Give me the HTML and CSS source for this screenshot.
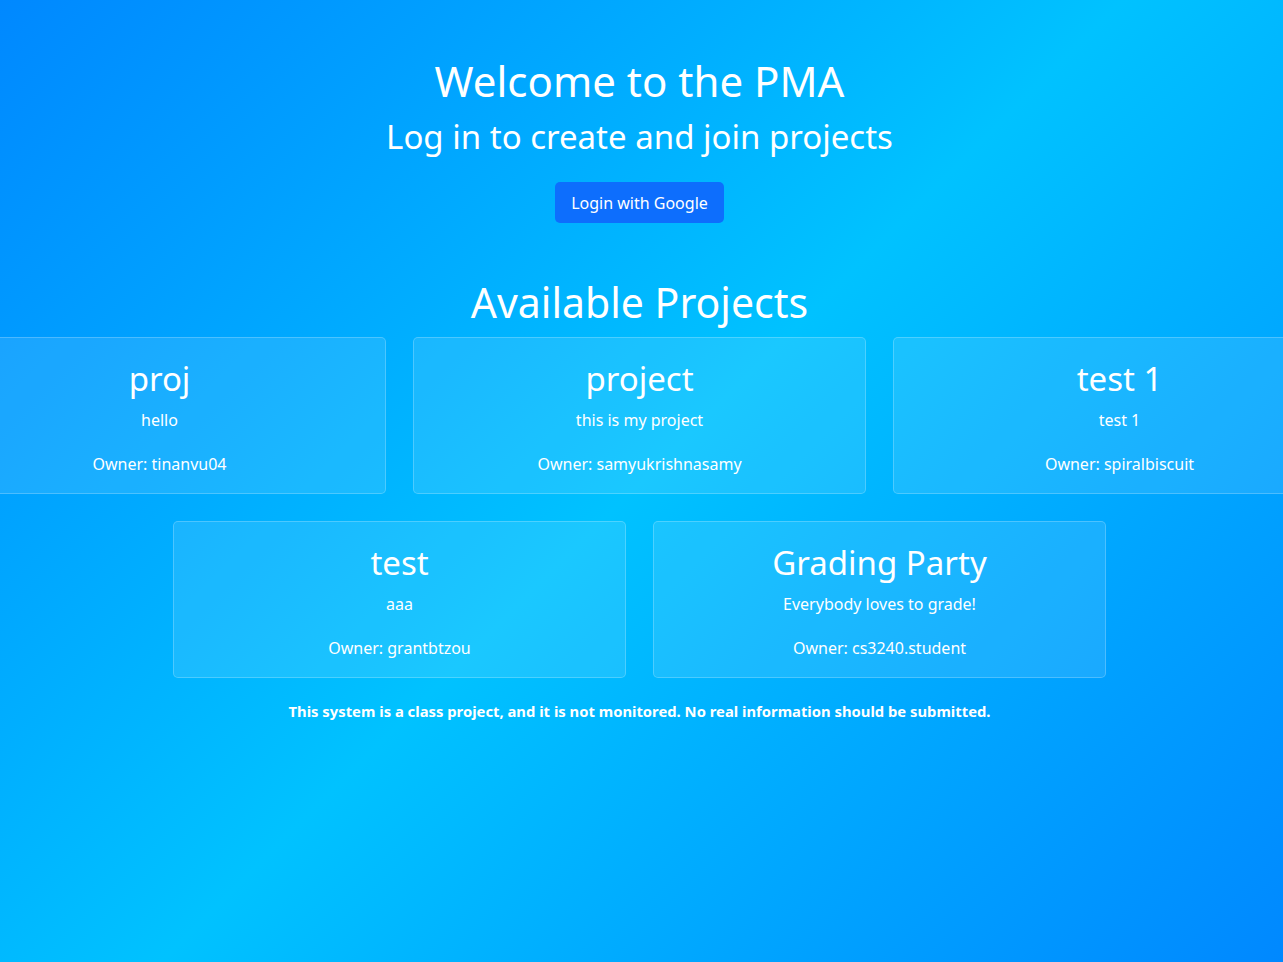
FILE: index.html
```html
<!DOCTYPE html>
<html lang="en">
<head>
<meta charset="utf-8">
<title>PMA</title>
<link rel="stylesheet" href="styles.css">
</head>
<body>
<main class="page">
  <header class="hero">
    <h1 class="hero-title">Welcome to the PMA</h1>
    <h2 class="hero-sub">Log in to create and join projects</h2>
    <a class="btn-login" href="#">Login with Google</a>
  </header>
  <section class="projects">
    <h2 class="projects-title">Available Projects</h2>
    <div class="card-row">
      <div class="card"><h3 class="card-title">proj</h3><p class="card-desc">hello</p><p class="card-owner">Owner: tinanvu04</p></div>
      <div class="card"><h3 class="card-title">project</h3><p class="card-desc">this is my project</p><p class="card-owner">Owner: samyukrishnasamy</p></div>
      <div class="card"><h3 class="card-title">test 1</h3><p class="card-desc">test 1</p><p class="card-owner">Owner: spiralbiscuit</p></div>
    </div>
    <div class="card-row">
      <div class="card"><h3 class="card-title">test</h3><p class="card-desc">aaa</p><p class="card-owner">Owner: grantbtzou</p></div>
      <div class="card"><h3 class="card-title">Grading Party</h3><p class="card-desc">Everybody loves to grade!</p><p class="card-owner">Owner: cs3240.student</p></div>
    </div>
  </section>
  <p class="disclaimer">This system is a class project, and it is not monitored. No real information should be submitted.</p>
</main>
</body>
</html>
```

FILE: styles.css
```css
html, body {
  margin: 0;
  padding: 0;
  height: 100%;
}
body {
  font-family: "Noto Sans", "Open Sans", sans-serif;
  color: #fff;
  background: linear-gradient(135deg, #0088ff 0%, #00c2ff 50%, #0088ff 100%);
  background-attachment: fixed;
  min-height: 962px;
  overflow: hidden;
}
.page {
  display: flex;
  flex-direction: column;
  align-items: center;
  padding-top: 56px;
  padding-right: 4px;
}
.hero {
  display: flex;
  flex-direction: column;
  align-items: center;
}
.hero-title {
  margin: 0;
  font-weight: 400;
  font-size: 42px;
  line-height: 50px;
}
.hero-sub {
  margin: 8px 0 0;
  font-weight: 400;
  font-size: 33px;
  line-height: 46px;
}
.btn-login {
  margin-top: 22px;
  display: inline-flex;
  align-items: center;
  justify-content: center;
  width: 169px;
  height: 41px;
  box-sizing: border-box;
  background: #0d6efd;
  border-radius: 5px;
  color: #fff;
  text-decoration: none;
  font-size: 16px;
}
.projects {
  margin-top: 51px;
  display: flex;
  flex-direction: column;
  align-items: center;
  width: 100%;
}
.projects-title {
  margin: 0;
  font-weight: 400;
  font-size: 41px;
  line-height: 56px;
}
.card-row {
  display: flex;
  justify-content: center;
  gap: 27px;
  width: 100%;
  margin-top: 27px;
}
.projects-title + .card-row {
  margin-top: 7px;
}
.card {
  flex: 0 0 453px;
  box-sizing: border-box;
  height: 157px;
  border: 1px solid rgba(255, 255, 255, 0.22);
  border-radius: 5px;
  background: rgba(255, 255, 255, 0.1);
  display: flex;
  flex-direction: column;
  align-items: center;
  padding-top: 20px;
}
.card-title {
  margin: 0 0 8px;
  font-weight: 400;
  font-size: 33px;
  line-height: 42px;
}
.card-desc {
  margin: 0;
  font-size: 16px;
  line-height: 24px;
}
.card-owner {
  margin: 20px 0 0;
  font-size: 16px;
  line-height: 24px;
}
.disclaimer {
  margin: 22px 0 0;
  font-weight: 700;
  font-size: 14.8px;
  line-height: 22px;
}
```
